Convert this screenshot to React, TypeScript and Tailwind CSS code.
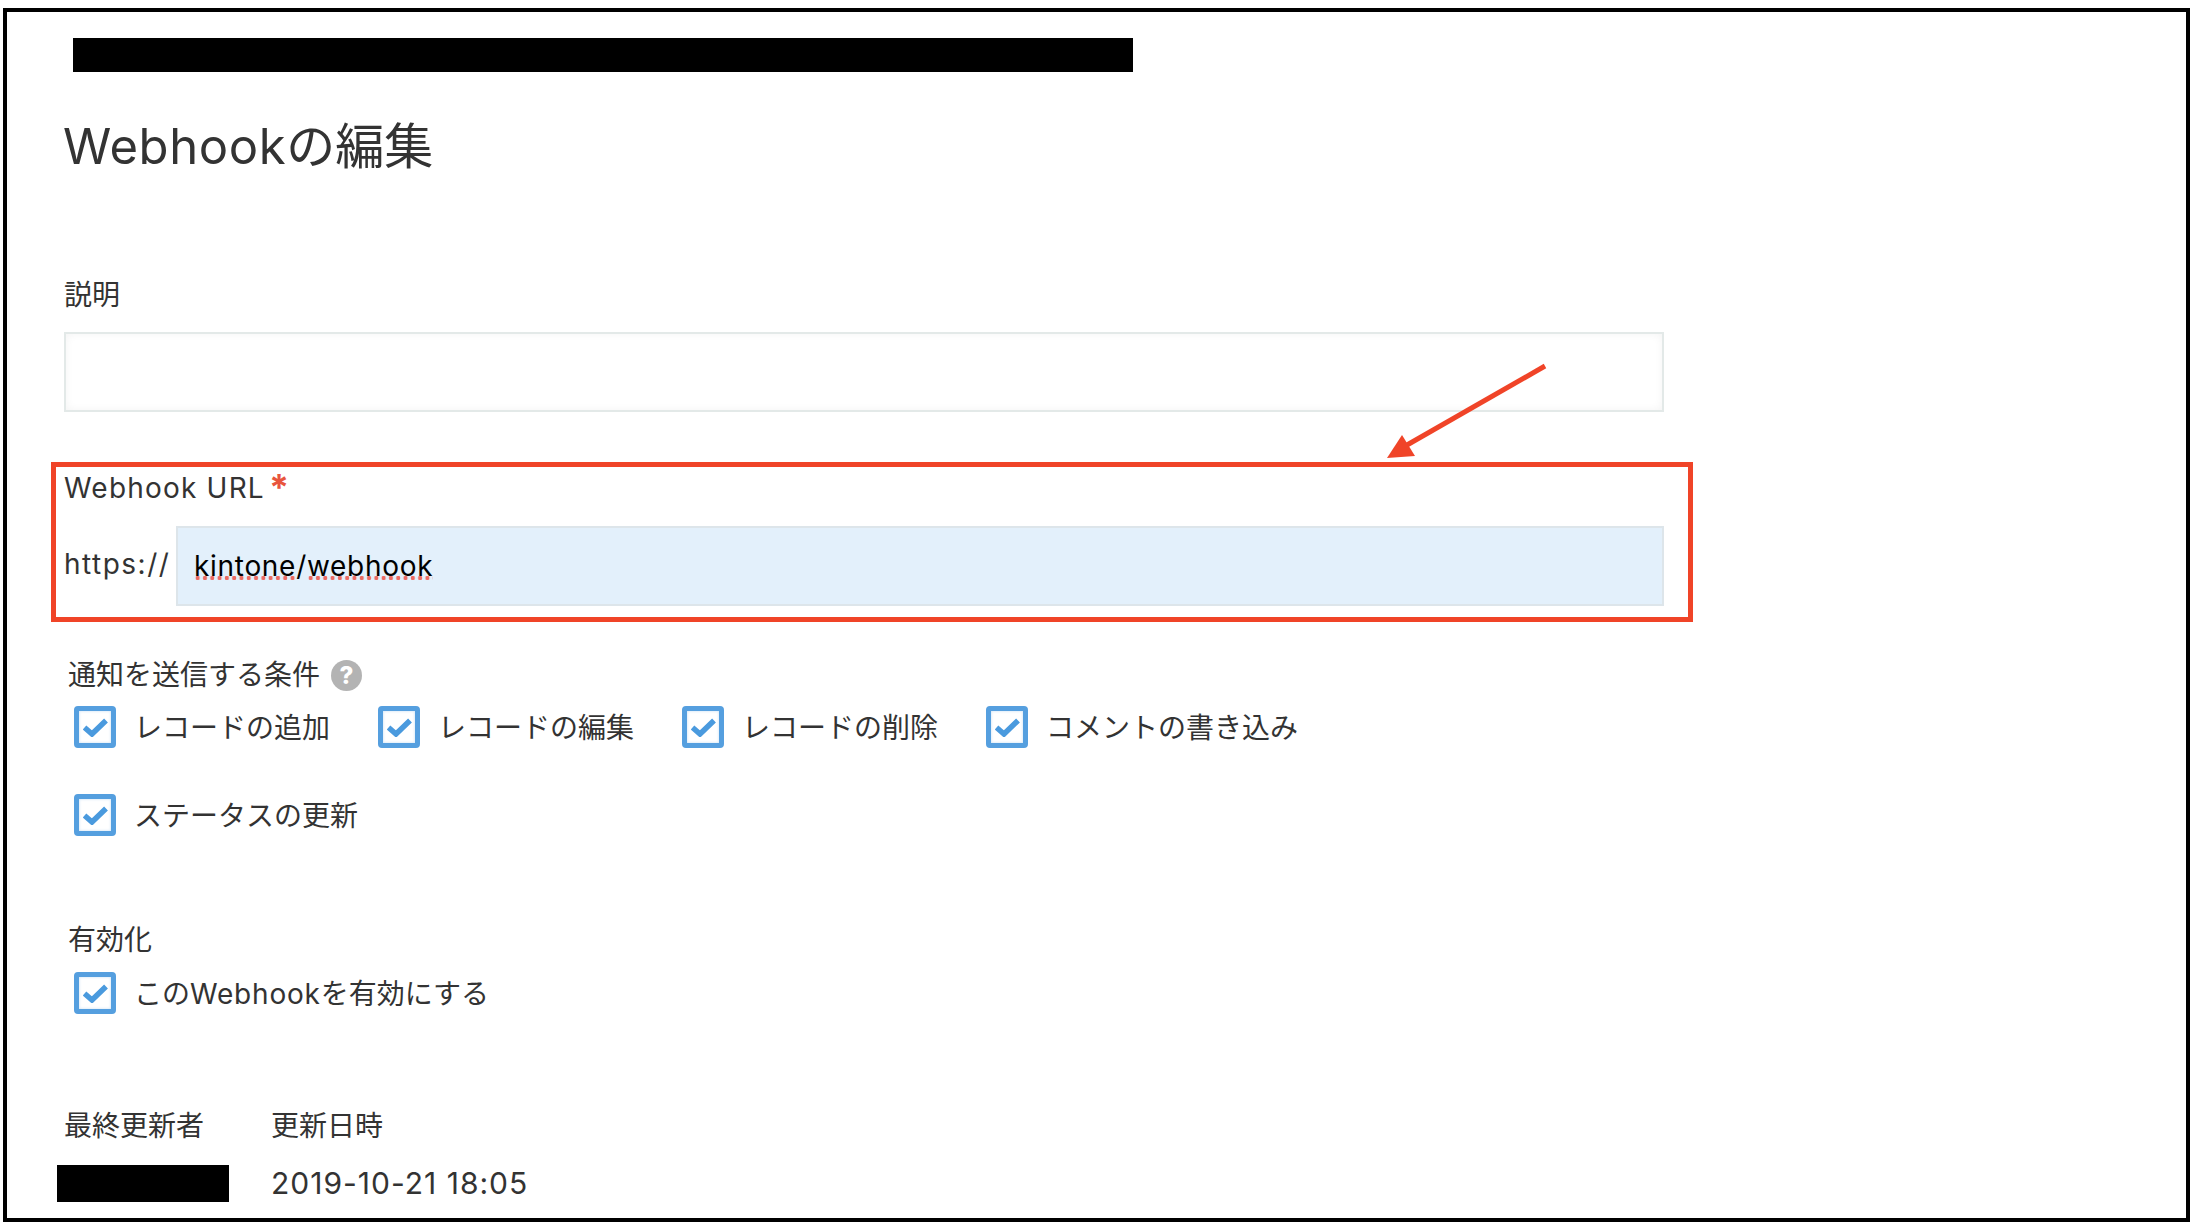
const FONT = "font-['Inter','Noto_Sans_CJK_JP',sans-serif]";
const SQUIGGLE =
  "h-[34px] bg-[radial-gradient(circle,#ec6a62_1.9px,transparent_2.4px)] bg-[length:7.3px_6px] bg-[position:0_calc(100%-2px)] bg-repeat-x leading-[34px]";

function Check() {
  return (
    <span className="flex h-[42px] w-[42px] shrink-0 items-center justify-center rounded-[4px] border-[5px] border-[#559fdf] bg-white shadow-[inset_0_0_3px_rgba(85,159,223,0.35)]">
      <svg width="25" height="20" viewBox="0 0 25 20" fill="none">
        <path d="M1.5 10.5L9 17L23 3.5" stroke="#4a9ade" strokeWidth="5.5" />
      </svg>
    </span>
  );
}

function Option({ children }: { children: React.ReactNode }) {
  return (
    <div className="flex h-[42px] items-center gap-[18px]">
      <Check />
      <span className="pt-[1px] text-[28px] leading-[42px] text-[#333]">{children}</span>
    </div>
  );
}

export default function App() {
  return (
    <div className={`${FONT} relative h-[1222px] w-[2192px] overflow-hidden bg-white pt-2 pr-[2px] pl-[3px]`}>
      <div className="h-full border-4 border-black pl-[57px]">
        <div className="mt-[26px] ml-[9px] h-[34px] w-[1060px] bg-black" />
        <h1 className="mt-[45px] -ml-[1px] h-[60px] text-[49px] leading-[60px] font-normal text-[#333]">
          <span className="tracking-[0.6px]">Webhook</span>の編集
        </h1>

        <div className="mt-[97px] h-[40px] text-[28px] leading-[42px] text-[#333]">説明</div>
        <div className="mt-[18px] h-[80px] w-[1600px] border-2 border-[#e3e9e8] bg-white shadow-[inset_0_0_8px_rgba(0,0,0,0.05)]" />

        <div className="mt-[50px] -ml-[13px] h-[160px] w-[1642px] border-[5px] border-[#f04428] pr-[24px] pl-[8px]">
          <div className="flex h-[40px] text-[28px] leading-[42px] tracking-[1.2px] text-[#333]">
            Webhook URL
            <span className="ml-[4px] h-[40px] text-[36px] leading-[40px] font-bold text-[#e8553d]">*</span>
          </div>
          <div className="mt-[19px] flex h-[80px]">
            <span className="w-[112px] shrink-0 text-[28px] leading-[77px] tracking-[1.5px] text-[#333]">https://</span>
            <div className="flex flex-1 items-center border-2 border-[#dde5ea] bg-[#e3f0fb] pl-[16px] text-[28px] tracking-[0.7px] text-black">
              <span className={SQUIGGLE}>kintone</span>
              /
              <span className={SQUIGGLE}>webhook</span>
            </div>
          </div>
        </div>

        <div className="mt-[32px] flex h-[40px] items-center pl-[4px] text-[28px] text-[#333]">
          <span className="pt-[1px] leading-[40px]">通知を送信する条件</span>
          <span className="mt-[3px] ml-[11px] flex h-[31px] w-[31px] items-center justify-center rounded-full bg-[#b3b3b3] text-[24px] font-extrabold text-white">?</span>
        </div>
        <div className="mt-[12px] ml-[10px] flex w-[1300px] flex-wrap gap-x-[48px] gap-y-[46px]">
          <Option>レコードの追加</Option>
          <Option>レコードの編集</Option>
          <Option>レコードの削除</Option>
          <Option>コメントの書き込み</Option>
          <Option>ステータスの更新</Option>
        </div>

        <div className="mt-[83px] h-[40px] pl-[4px] text-[28px] leading-[43px] text-[#333]">有効化</div>
        <div className="mt-[13px] ml-[10px]">
          <Option>
            この<span className="tracking-[0.8px]">Webhook</span>を有効にする
          </Option>
        </div>

        <div className="mt-[91px] grid grid-cols-[207px_auto] text-[28px] text-[#333]">
          <div className="h-[40px] leading-[43px]">最終更新者</div>
          <div className="h-[40px] leading-[43px]">更新日時</div>
          <div className="mt-[20px] -ml-[7px] h-[37px] w-[172px] bg-black" />
          <div className="mt-[20px] h-[37px] text-[30px] leading-[37px] tracking-[1px]">2019-10-21 18:05</div>
        </div>
      </div>

      <svg className="absolute top-[360px] left-[1380px]" width="170" height="105" viewBox="0 0 170 105" fill="none">
        <path d="M165 6L27 85" stroke="#f04428" strokeWidth="5" />
        <path d="M22 75L7 98L35 96Z" fill="#f04428" />
      </svg>
    </div>
  );
}
